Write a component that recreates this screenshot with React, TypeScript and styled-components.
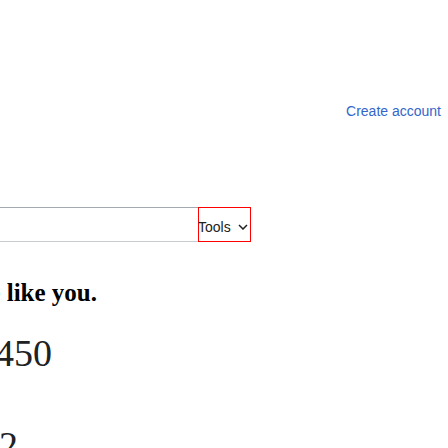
import React from 'react';
import styled, {createGlobalStyle} from "styled-components";

const GlobalStyle = createGlobalStyle`
  html, body {
    margin: 0;
    background: #ffffff;
    overflow: hidden;
  }

  body {
    font-family: "Liberation Sans", Arial, sans-serif;
    color: #202122;
  }
`

export default function App() {
    return (
        <Page>
            <GlobalStyle/>
            <Header>
                <AccountLink href="#">Create account</AccountLink>
            </Header>

            <Toolbar>
                <TabStrip/>
                <ToolsMenu role="button">
                    <span>Tools</span>
                    <Chevron width="10" height="6" viewBox="0 0 10 6">
                        <path d="M1 1l4 4 4-4" fill="none" stroke="#202122" strokeWidth="1.5"/>
                    </Chevron>
                </ToolsMenu>
            </Toolbar>

            <Content>
                <Tagline width={97}>
                    <span>made by people like you.</span>
                </Tagline>
                <Count width={52}>
                    <span>6,912,450</span>
                </Count>
                <Count width={18} next>
                    <span>64,112</span>
                </Count>
            </Content>
        </Page>
    );
}

const Page = styled.div`
  width: 448px;
  height: 448px;
  overflow: hidden;
`

const Header = styled.header`
  box-sizing: border-box;
  height: 207px;
  padding: 103px 7px 0 0;
  text-align: right;
  line-height: 16px;
`

const AccountLink = styled.a`
  font-size: 14px;
  color: #3366cc;
  text-decoration: none;
`

const Toolbar = styled.nav`
  display: flex;
  width: 251px;
  height: 35px;
`

const TabStrip = styled.div`
  flex: 1 1 auto;
  min-width: 0;
  box-sizing: border-box;
  height: 35px;
  border-top: 1px solid #a2a9b1;
  border-bottom: 1px solid #c8ccd1;
`

const ToolsMenu = styled.div`
  box-sizing: border-box;
  flex: 0 0 53px;
  height: 35px;
  display: flex;
  align-items: flex-start;
  gap: 7px;
  padding-top: 12px;
  box-shadow: inset 0 0 0 1px #ff0000;
  font-size: 14px;
  line-height: 16px;
  color: #202122;
  overflow: hidden;
`

const Chevron = styled.svg`
  margin-top: 5px;
  flex-shrink: 0;
`

const Content = styled.main`
  padding-top: 36px;
  font-family: "Liberation Serif", "Times New Roman", serif;
  color: #202122;
`

const Clip = styled.div<{ width: number }>`
  display: flex;
  justify-content: flex-end;
  width: ${p => p.width}px;
  white-space: nowrap;
`

const Tagline = styled(Clip)`
  font-size: 25px;
  font-weight: bold;
  line-height: 30px;
  color: #000000;
`

const Count = styled(Clip)<{ next?: boolean }>`
  margin-top: ${p => p.next ? '46px' : '22px'};
  font-size: 38px;
  line-height: 46px;
`
